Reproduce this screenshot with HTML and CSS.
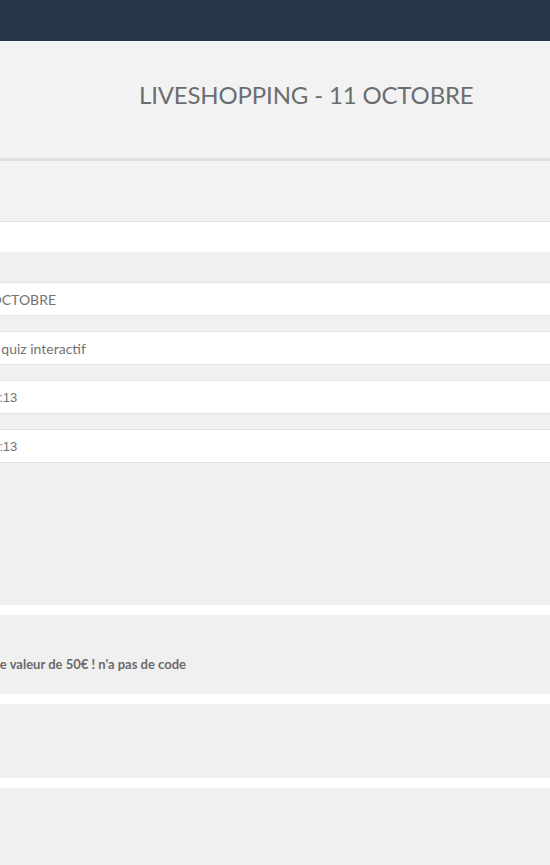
FILE: index.html
```html
<!DOCTYPE html>
<html lang="fr">
<head>
    <meta charset="UTF-8">
    <meta name="viewport" content="width=device-width, initial-scale=1.0">
    <title>Liveshopping - 11 octobre</title>
    <link rel="stylesheet" href="styles.css">
</head>
<body>
    <div class="topbar"></div>

    <div class="title-band">
        <h1>LIVESHOPPING - 11 OCTOBRE</h1>
    </div>

    <div class="scroller">
        <div class="form">
            <div class="spacer"></div>
            <div class="field first"></div>
            <div class="gap big"></div>
            <div class="field"><span class="value">LIVE SHOPPING – 11 OCTOBRE</span></div>
            <div class="gap"></div>
            <div class="field"><span class="value">Liveshopping déco avec quiz interactif</span></div>
            <div class="gap"></div>
            <div class="field"><span class="value date">Le mer. 11/10/2023 19:00:13</span></div>
            <div class="gap"></div>
            <div class="field"><span class="value date">Le mer. 11/10/2023 20:00:13</span></div>
        </div>

        <div class="blocks">
            <div class="block tall"></div>
            <div class="block offer">
                <p class="offer-text">Bon d'achat d'une valeur de 50€ ! n'a pas de code</p>
            </div>
            <div class="block mid"></div>
            <div class="block last"></div>
        </div>
    </div>
</body>
</html>
```

FILE: styles.css
```css
html, body {
    margin: 0;
    padding: 0;
    overflow: hidden;
}
body {
    font-family: Lato, "Open Sans", sans-serif;
    background: #f0f0f0;
    color: #6b6b6b;
    width: 550px;
}
.topbar {
    height: 41px;
    background: #253746;
}
.title-band {
    background: #f2f2f2;
    height: 120px;
    box-sizing: border-box;
    border-bottom: 3px solid #dedede;
    display: flex;
    align-items: center;
}
.title-band h1 {
    margin: 0 0 10px 139px;
    font-size: 24px;
    font-weight: 400;
    color: #6b6e71;
    letter-spacing: -0.16px;
}
/* la page est défilée horizontalement : le contenu commence hors écran */
.scroller {
    margin-left: -148px;
    width: 698px;
}
.form {
    background: #f2f2f2;
}
.spacer {
    height: 60px;
}
.field {
    background: #fff;
    height: 32px;
    border-top: 1px solid #e4e4e4;
    border-bottom: 1px solid #e4e4e4;
    display: flex;
    align-items: center;
    font-size: 14px;
    color: #727272;
}
.field.first {
    height: 30px;
    border-bottom: none;
}
.gap {
    height: 15px;
    background: #f0f0f0;
}
.gap.big {
    height: 30px;
}
.value.date {
    font-family: "Liberation Sans", Arial, sans-serif;
    font-size: 13px;
}
.blocks {
    display: flex;
    flex-direction: column;
    gap: 10px;
    background: #fff;
}
.block {
    background: #f0f0f0;
}
.block.tall {
    height: 142px;
}
.block.offer {
    height: 79px;
    display: flex;
    align-items: center;
}
.offer-text {
    margin: 19px 0 0 52px;
    font-size: 13px;
    font-weight: 700;
    color: #6a6a6a;
}
.block.mid {
    height: 74px;
}
.block.last {
    height: 80px;
}
```
